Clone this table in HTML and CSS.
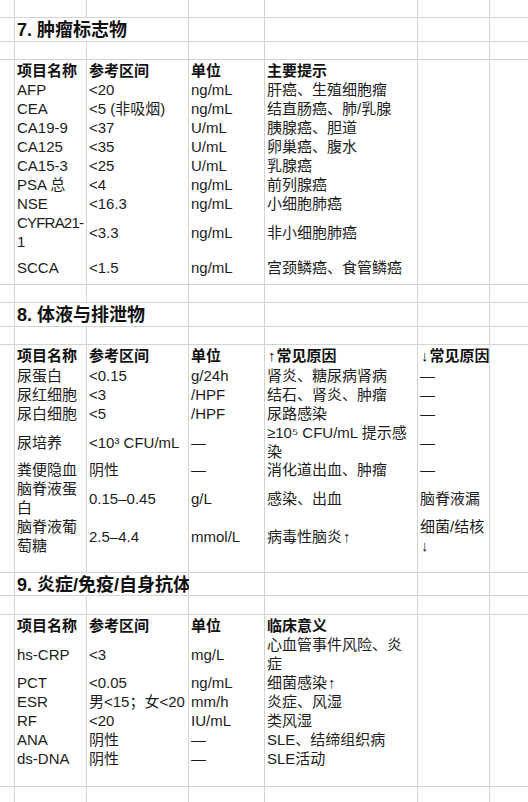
FILE: index.html
```html
<!DOCTYPE html>
<html lang="zh-CN">
<head>
<meta charset="utf-8">
<title>检验参考表</title>
<link rel="stylesheet" href="styles.css">
</head>
<body>
<div class="sheet">
  <div class="row h17"><div class="c"></div><div class="c"></div><div class="c"></div><div class="c"></div><div class="c"></div><div class="c"></div><div class="c"></div></div>
  <div class="row h23"><div class="c"></div><div class="c title span2"><span>7. 肿瘤标志物</span></div><div class="c"></div><div class="c"></div><div class="c"></div><div class="c"></div></div>
  <div class="row h17"><div class="c"></div><div class="c"></div><div class="c"></div><div class="c"></div><div class="c"></div><div class="c"></div><div class="c"></div></div>
  <div class="row h18 head"><div class="c"></div><div class="c"><span>项目名称</span></div><div class="c"><span>参考区间</span></div><div class="c"><span>单位</span></div><div class="c"><span>主要提示</span></div><div class="c"></div><div class="c"></div></div>
  <div class="row h18"><div class="c"></div><div class="c"><span>AFP</span></div><div class="c"><span>&lt;20</span></div><div class="c"><span>ng/mL</span></div><div class="c"><span>肝癌、生殖细胞瘤</span></div><div class="c"></div><div class="c"></div></div>
  <div class="row h18"><div class="c"></div><div class="c"><span>CEA</span></div><div class="c"><span>&lt;5 (非吸烟)</span></div><div class="c"><span>ng/mL</span></div><div class="c"><span>结直肠癌、肺/乳腺</span></div><div class="c"></div><div class="c"></div></div>
  <div class="row h18"><div class="c"></div><div class="c"><span>CA19-9</span></div><div class="c"><span>&lt;37</span></div><div class="c"><span>U/mL</span></div><div class="c"><span>胰腺癌、胆道</span></div><div class="c"></div><div class="c"></div></div>
  <div class="row h18"><div class="c"></div><div class="c"><span>CA125</span></div><div class="c"><span>&lt;35</span></div><div class="c"><span>U/mL</span></div><div class="c"><span>卵巢癌、腹水</span></div><div class="c"></div><div class="c"></div></div>
  <div class="row h18"><div class="c"></div><div class="c"><span>CA15-3</span></div><div class="c"><span>&lt;25</span></div><div class="c"><span>U/mL</span></div><div class="c"><span>乳腺癌</span></div><div class="c"></div><div class="c"></div></div>
  <div class="row h18"><div class="c"></div><div class="c"><span>PSA 总</span></div><div class="c"><span>&lt;4</span></div><div class="c"><span>ng/mL</span></div><div class="c"><span>前列腺癌</span></div><div class="c"></div><div class="c"></div></div>
  <div class="row h18"><div class="c"></div><div class="c"><span>NSE</span></div><div class="c"><span>&lt;16.3</span></div><div class="c"><span>ng/mL</span></div><div class="c"><span>小细胞肺癌</span></div><div class="c"></div><div class="c"></div></div>
  <div class="row h37"><div class="c"></div><div class="c tight"><span>CYFRA21-<br>1</span></div><div class="c"><span>&lt;3.3</span></div><div class="c"><span>ng/mL</span></div><div class="c"><span>非小细胞肺癌</span></div><div class="c"></div><div class="c"></div></div>
  <div class="row h34"><div class="c"></div><div class="c"><span>SCCA</span></div><div class="c"><span>&lt;1.5</span></div><div class="c"><span>ng/mL</span></div><div class="c"><span>宫颈鳞癌、食管鳞癌</span></div><div class="c"></div><div class="c"></div></div>
  <div class="row h17"><div class="c"></div><div class="c"></div><div class="c"></div><div class="c"></div><div class="c"></div><div class="c"></div><div class="c"></div></div>
  <div class="row h23"><div class="c"></div><div class="c title span2"><span>8. 体液与排泄物</span></div><div class="c"></div><div class="c"></div><div class="c"></div><div class="c"></div></div>
  <div class="row h17"><div class="c"></div><div class="c"></div><div class="c"></div><div class="c"></div><div class="c"></div><div class="c"></div><div class="c"></div></div>
  <div class="row h19 head"><div class="c"></div><div class="c"><span>项目名称</span></div><div class="c"><span>参考区间</span></div><div class="c"><span>单位</span></div><div class="c"><span><span class="arr">↑</span>常见原因</span></div><div class="c"><span><span class="arr">↓</span>常见原因</span></div><div class="c"></div></div>
  <div class="row h18"><div class="c"></div><div class="c"><span>尿蛋白</span></div><div class="c"><span>&lt;0.15</span></div><div class="c"><span>g/24h</span></div><div class="c"><span>肾炎、糖尿病肾病</span></div><div class="c"><span>—</span></div><div class="c"></div></div>
  <div class="row h18"><div class="c"></div><div class="c"><span>尿红细胞</span></div><div class="c"><span>&lt;3</span></div><div class="c"><span>/HPF</span></div><div class="c"><span>结石、肾炎、肿瘤</span></div><div class="c"><span>—</span></div><div class="c"></div></div>
  <div class="row h18"><div class="c"></div><div class="c"><span>尿白细胞</span></div><div class="c"><span>&lt;5</span></div><div class="c"><span>/HPF</span></div><div class="c"><span>尿路感染</span></div><div class="c"><span>—</span></div><div class="c"></div></div>
  <div class="row h36"><div class="c"></div><div class="c"><span>尿培养</span></div><div class="c"><span>&lt;10³ CFU/mL</span></div><div class="c"><span>—</span></div><div class="c"><span>≥10⁵ CFU/mL 提示感<br>染</span></div><div class="c"><span>—</span></div><div class="c"></div></div>
  <div class="row h18"><div class="c"></div><div class="c"><span>粪便隐血</span></div><div class="c"><span>阴性</span></div><div class="c"><span>—</span></div><div class="c"><span>消化道出血、肿瘤</span></div><div class="c"><span>—</span></div><div class="c"></div></div>
  <div class="row h37"><div class="c"></div><div class="c"><span>脑脊液蛋<br>白</span></div><div class="c"><span>0.15–0.45</span></div><div class="c"><span>g/L</span></div><div class="c"><span>感染、出血</span></div><div class="c"><span>脑脊液漏</span></div><div class="c"></div></div>
  <div class="row h37"><div class="c"></div><div class="c"><span>脑脊液葡<br>萄糖</span></div><div class="c"><span>2.5–4.4</span></div><div class="c"><span>mmol/L</span></div><div class="c"><span>病毒性脑炎<span class="arr">↑</span></span></div><div class="c"><span>细菌/结核<br><span class="arr">↓</span></span></div><div class="c"></div></div>
  <div class="row h18"><div class="c"></div><div class="c"></div><div class="c"></div><div class="c"></div><div class="c"></div><div class="c"></div><div class="c"></div></div>
  <div class="row h22"><div class="c"></div><div class="c title span2"><span>9. 炎症/免疫/自身抗体</span></div><div class="c"></div><div class="c"></div><div class="c"></div><div class="c"></div></div>
  <div class="row h18"><div class="c"></div><div class="c"></div><div class="c"></div><div class="c"></div><div class="c"></div><div class="c"></div><div class="c"></div></div>
  <div class="row h18 head"><div class="c"></div><div class="c"><span>项目名称</span></div><div class="c"><span>参考区间</span></div><div class="c"><span>单位</span></div><div class="c"><span>临床意义</span></div><div class="c"></div><div class="c"></div></div>
  <div class="row h37"><div class="c"></div><div class="c"><span>hs-CRP</span></div><div class="c"><span>&lt;3</span></div><div class="c"><span>mg/L</span></div><div class="c"><span>心血管事件风险、炎<br>症</span></div><div class="c"></div><div class="c"></div></div>
  <div class="row h18"><div class="c"></div><div class="c"><span>PCT</span></div><div class="c"><span>&lt;0.05</span></div><div class="c"><span>ng/mL</span></div><div class="c"><span>细菌感染<span class="arr">↑</span></span></div><div class="c"></div><div class="c"></div></div>
  <div class="row h18"><div class="c"></div><div class="c"><span>ESR</span></div><div class="c"><span>男&lt;15；女&lt;20</span></div><div class="c"><span>mm/h</span></div><div class="c"><span>炎症、风湿</span></div><div class="c"></div><div class="c"></div></div>
  <div class="row h18"><div class="c"></div><div class="c"><span>RF</span></div><div class="c"><span>&lt;20</span></div><div class="c"><span>IU/mL</span></div><div class="c"><span>类风湿</span></div><div class="c"></div><div class="c"></div></div>
  <div class="row h18"><div class="c"></div><div class="c"><span>ANA</span></div><div class="c"><span>阴性</span></div><div class="c"><span>—</span></div><div class="c"><span>SLE、结缔组织病</span></div><div class="c"></div><div class="c"></div></div>
  <div class="row h18"><div class="c"></div><div class="c"><span>ds-DNA</span></div><div class="c"><span>阴性</span></div><div class="c"><span>—</span></div><div class="c"><span>SLE活动</span></div><div class="c"></div><div class="c"></div></div>
  <div class="row h19"><div class="c"></div><div class="c"></div><div class="c"></div><div class="c"></div><div class="c"></div><div class="c"></div><div class="c"></div></div>
  <div class="row h19"><div class="c"></div><div class="c"></div><div class="c"></div><div class="c"></div><div class="c"></div><div class="c"></div><div class="c"></div></div>
</div>
</body>
</html>
```

FILE: styles.css
```css
html, body {
  margin: 0;
  padding: 0;
  background: #ffffff;
}
body {
  width: 528px;
  height: 802px;
  overflow: hidden;
  font-family: "Liberation Sans", "Noto Sans CJK SC", sans-serif;
  font-size: 15px;
  color: #1c1c1c;
}
.sheet {
  display: flex;
  flex-direction: column;
  gap: 1px;
  background: #d4d4d4;
  width: 528px;
  overflow: hidden;
}
.row {
  display: grid;
  grid-template-columns: 14px 71px 101px 75px 152px 71px 1fr;
  column-gap: 1px;
}
.c {
  background: #ffffff;
  display: flex;
  align-items: center;
  padding: 1px 0 0 2px;
  line-height: 19px;
  white-space: nowrap;
  min-width: 0;
}
.span2 {
  grid-column: span 2;
}
.title {
  font-size: 18px;
  font-weight: bold;
  color: #111111;
  padding-top: 2px;
}
.head .c {
  font-weight: bold;
  color: #111111;
}
.tight {
  letter-spacing: -0.8px;
}
.arr {
  font-family: "Liberation Sans", sans-serif;
  font-size: 15px;
  font-weight: normal;
  margin: 0 1px;
}
.h17 { height: 17px; }
.h18 { height: 18px; }
.h19 { height: 19px; }
.h22 { height: 22px; }
.h23 { height: 23px; }
.h34 { height: 34px; }
.h36 { height: 36px; }
.h37 { height: 37px; }
```
